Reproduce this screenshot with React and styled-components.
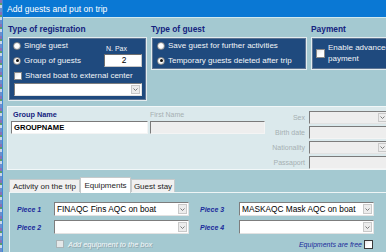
import React from "react";
import styled, { createGlobalStyle } from "styled-components";

const GlobalStyle = createGlobalStyle`
  html, body { margin: 0; padding: 0; background: #a4c9d1; }
  body { font-family: "Liberation Sans", Arial, sans-serif; }
`;

const Screen = styled.div`
  width: 386px;
  height: 252px;
  overflow: hidden;
  display: flex;
`;

const Backdrop = styled.div`
  width: 2px;
  flex: none;
  background: repeating-linear-gradient(180deg, #8a70b4 0 3px, #5c9c6c 3px 5px, #c9d6ea 5px 8px, #6b8ecd 8px 12px);
`;

const Window = styled.div`
  flex: 1;
  min-width: 0;
  display: flex;
  flex-direction: column;
  border-left: 1px solid #3f8ad6;
  background: #a4c9d1;
  overflow: hidden;
`;

const TitleBar = styled.div`
  height: 17px;
  flex: none;
  display: flex;
  align-items: center;
  padding-left: 4px;
  background: #0a78d4;
  color: #ffffff;
  font-size: 8.6px;
  border-bottom: 1px solid #d2e8ee;
`;

const Body = styled.div`
  display: flex;
  flex-direction: column;
  padding: 5px 0 0 4px;
  min-width: 0;
`;

const TopRow = styled.div`
  display: flex;
  gap: 4px;
  align-items: flex-start;
`;

const Group = styled.div`
  flex: none;
  width: ${(p) => p.$w}px;
  margin-left: ${(p) => p.$ml || 0}px;
`;

const GroupTitle = styled.div`
  height: 12px;
  line-height: 12px;
  margin-bottom: 2px;
  font-size: 8.4px;
  font-weight: bold;
  color: #15237f;
  white-space: nowrap;
`;

const BlueBox = styled.div`
  box-sizing: border-box;
  height: ${(p) => p.$h}px;
  background: #1f4a7e;
  border: 1px solid #e4ecef;
  box-shadow: inset 0 0 0 1px #5d7594;
  color: #f2f5f8;
  font-size: 8px;
  padding: ${(p) => p.$pad};
`;

const RegGrid = styled.div`
  display: grid;
  grid-template-columns: 91px 38px;
  grid-template-rows: 15px 15px;
`;

const Row = styled.label`
  display: flex;
  align-items: center;
  gap: 3px;
  height: 15px;
  white-space: nowrap;
`;

const Radio = styled.span`
  width: 8px;
  height: 8px;
  flex: none;
  box-sizing: border-box;
  border-radius: 50%;
  border: 1px solid #8a8a8a;
  background: radial-gradient(circle at 40% 40%, #ffffff 40%, #dcdcdc 100%);
  display: flex;
  align-items: center;
  justify-content: center;
  &::after {
    content: "";
    width: 3px;
    height: 3px;
    border-radius: 50%;
    background: ${(p) => (p.$on ? "#111" : "transparent")};
  }
`;

const Check = styled.span`
  width: ${(p) => p.$s || 8}px;
  height: ${(p) => p.$s || 8}px;
  flex: none;
  box-sizing: border-box;
  margin-left: ${(p) => p.$ml || 0}px;
  border: 1px solid ${(p) => (p.$dis ? "#a9b4b7" : p.$dark ? "#3a3a3a" : "#8a8a8a")};
  background: ${(p) => (p.$dis ? "#e4e8e9" : "linear-gradient(135deg, #e6e6e6, #ffffff 60%)")};
`;

const PaxLabel = styled.div`
  font-size: 7px;
  align-self: end;
  padding: 0 0 1px 2px;
  white-space: nowrap;
`;

const PaxInput = styled.div`
  align-self: center;
  height: 13px;
  box-sizing: border-box;
  background: #fff;
  border: 1px solid #c8c8c8;
  border-top-color: #6f6f6f;
  border-left-color: #6f6f6f;
  color: #000;
  font-size: 8.4px;
  line-height: 11px;
  text-align: center;
  padding-left: 2px;
`;

const SelectBox = styled.div`
  height: ${(p) => p.$h || 14}px;
  width: ${(p) => (p.$w ? `${p.$w}px` : "auto")};
  margin-left: ${(p) => p.$ml || 0}px;
  box-sizing: border-box;
  display: flex;
  align-items: stretch;
  background: ${(p) => (p.$dis ? "#eeeeee" : "#ffffff")};
  border: 1px solid #e2e2e2;
  border-top-color: #7d7d7d;
  border-left-color: #7d7d7d;
  color: #000;
  font-size: 8.3px;
`;

const SelectText = styled.div`
  flex: 1;
  min-width: 0;
  padding-left: 2px;
  display: flex;
  align-items: center;
  white-space: nowrap;
  overflow: hidden;
`;

const ArrowBtn = styled.div`
  width: 9px;
  flex: none;
  margin: 1px;
  box-sizing: border-box;
  background: #ececec;
  border: 1px solid #c9c9c9;
  display: flex;
  align-items: center;
  justify-content: center;
`;

const Chevron = () => (
  <svg width="5" height="3" viewBox="0 0 5 3">
    <polyline points="0.5,0.5 2.5,2.5 4.5,0.5" fill="none" stroke="#7a7a7a" strokeWidth="1" />
  </svg>
);

const Select = ({ text, ...rest }) => (
  <SelectBox {...rest}>
    <SelectText>{text}</SelectText>
    <ArrowBtn>
      <Chevron />
    </ArrowBtn>
  </SelectBox>
);

const PayRow = styled.div`
  display: flex;
  align-items: center;
  gap: 3px;
  height: 100%;
  line-height: 10.5px;
`;

const Panel = styled.div`
  margin-top: 5px;
  height: 64px;
  box-sizing: border-box;
  background: #dbe9ec;
  border: 1px solid #f1f7f8;
  border-right: none;
  padding: 3px 0 0 3px;
  display: flex;
  overflow: hidden;
`;

const FieldCol = styled.div`
  width: ${(p) => p.$w}px;
  flex: none;
  margin-right: ${(p) => p.$mr || 0}px;
`;

const FieldLabel = styled.div`
  height: 10px;
  line-height: 10px;
  margin-bottom: 1px;
  padding-left: ${(p) => p.$pl || 0}px;
  font-size: ${(p) => (p.$bold ? 7.3 : 7)}px;
  font-weight: ${(p) => (p.$bold ? "bold" : "normal")};
  color: ${(p) => (p.$bold ? "#15237f" : "#a6b0b2")};
  white-space: nowrap;
`;

const TextField = styled.div`
  height: 13px;
  box-sizing: border-box;
  background: ${(p) => (p.$dis ? "#eeeeee" : "#ffffff")};
  border: 1px solid #f4f4f4;
  border-top-color: #7a7a7a;
  border-left-color: #7a7a7a;
  padding-left: 2px;
  font-size: 7.6px;
  font-weight: bold;
  line-height: 11px;
  color: #000;
`;

const SideGrid = styled.div`
  flex: none;
  margin-top: 1px;
  display: grid;
  grid-template-columns: 40px 80px;
  grid-auto-rows: 13px;
  column-gap: 4px;
  row-gap: 2px;
`;

const SideLabel = styled.div`
  font-size: 7px;
  color: #a6b0b2;
  text-align: right;
  line-height: 13px;
  white-space: nowrap;
`;

const TabStrip = styled.div`
  display: flex;
  align-items: flex-end;
  height: 15px;
  margin: 7px 0 0 2px;
  position: relative;
  z-index: 1;
`;

const Tab = styled.div`
  width: ${(p) => p.$w}px;
  height: ${(p) => (p.$active ? 16 : 13)}px;
  box-sizing: border-box;
  margin-bottom: ${(p) => (p.$active ? -1 : 0)}px;
  background: ${(p) => (p.$active ? "#ffffff" : "#f0f0f0")};
  border: 1px solid #c6cacb;
  border-bottom: none;
  font-size: 8px;
  color: #1d1d1d;
  display: flex;
  align-items: center;
  justify-content: center;
  white-space: nowrap;
`;

const TabPanel = styled.div`
  margin-left: 2px;
  border-top: 1px solid #eef5f6;
  border-left: 1px solid #eef5f6;
  padding: 9px 0 0 7px;
  height: 60px;
`;

const PieceGrid = styled.div`
  display: grid;
  grid-template-columns: 37px 135px 50px 135px;
  grid-template-rows: 14px 14px 12px;
  row-gap: 4px;
  align-items: center;
`;

const PieceLabel = styled.div`
  font-size: 7px;
  font-weight: bold;
  font-style: italic;
  color: #1b2b9b;
  padding-left: ${(p) => p.$pl || 0}px;
  white-space: nowrap;
`;

const CheckLine = styled.div`
  display: flex;
  align-items: center;
  gap: ${(p) => p.$gap}px;
  justify-content: ${(p) => (p.$end ? "flex-end" : "flex-start")};
  padding-right: ${(p) => (p.$end ? 1 : 0)}px;
  white-space: nowrap;
  font-size: 7px;
  font-style: italic;
`;

const DisabledText = styled.span`
  color: #f4f8f9;
  text-shadow: 1px 1px 0 #8fa4aa;
  font-size: 7.4px;
`;

const FreeText = styled.span`
  color: #1b2b9b;
`;

export default function App() {
  return (
    <>
      <GlobalStyle />
      <Screen>
        <Backdrop />
        <Window>
          <TitleBar>Add guests and put on trip</TitleBar>
          <Body>
            <TopRow>
              <Group $w={139} $ml={1}>
                <GroupTitle>Type of registration</GroupTitle>
                <BlueBox $h={64} $pad="0 4px">
                  <RegGrid>
                    <Row>
                      <Radio />
                      Single guest
                    </Row>
                    <PaxLabel>N. Pax</PaxLabel>
                    <Row>
                      <Radio $on />
                      Group of guests
                    </Row>
                    <PaxInput>2</PaxInput>
                  </RegGrid>
                  <Row>
                    <Check $ml={1} />
                    Shared boat to external center
                  </Row>
                  <Select $h={13} $ml={1} text="" />
                </BlueBox>
              </Group>
              <Group $w={156}>
                <GroupTitle>Type of guest</GroupTitle>
                <BlueBox $h={33} $pad="0 4px 0 5px">
                  <Row>
                    <Radio />
                    Save guest for further activities
                  </Row>
                  <Row>
                    <Radio $on />
                    Temporary guests deleted after trip
                  </Row>
                </BlueBox>
              </Group>
              <Group $w={90}>
                <GroupTitle>Payment</GroupTitle>
                <BlueBox $h={33} $pad="0 0 0 4px">
                  <PayRow>
                    <Check $s={9} />
                    <span>
                      Enable advanced
                      <br />
                      payment
                    </span>
                  </PayRow>
                </BlueBox>
              </Group>
            </TopRow>

            <Panel>
              <FieldCol $w={137} $mr={2}>
                <FieldLabel $bold $pl={2}>Group Name</FieldLabel>
                <TextField>GROUPNAME</TextField>
              </FieldCol>
              <FieldCol $w={115}>
                <FieldLabel>First Name</FieldLabel>
                <TextField $dis />
              </FieldCol>
              <SideGrid>
                <SideLabel>Sex</SideLabel>
                <Select $h={13} $dis text="" />
                <SideLabel>Birth date</SideLabel>
                <TextField $dis />
                <SideLabel>Nationality</SideLabel>
                <Select $h={13} $dis text="" />
                <SideLabel>Passaport</SideLabel>
                <TextField $dis />
              </SideGrid>
            </Panel>

            <TabStrip>
              <Tab $w={71}>Activity on the trip</Tab>
              <Tab $w={51} $active>Equipments</Tab>
              <Tab $w={44}>Guest stay</Tab>
            </TabStrip>
            <TabPanel>
              <PieceGrid>
                <PieceLabel>Piece 1</PieceLabel>
                <Select text="FINAQC Fins AQC on boat" />
                <PieceLabel $pl={11}>Piece 3</PieceLabel>
                <Select text="MASKAQC Mask AQC on boat" />
                <PieceLabel>Piece 2</PieceLabel>
                <Select text="" />
                <PieceLabel $pl={11}>Piece 4</PieceLabel>
                <Select text="" />
                <span />
                <CheckLine $gap={4}>
                  <Check $dis $ml={2} />
                  <DisabledText>Add equipment to the box</DisabledText>
                </CheckLine>
                <span />
                <CheckLine $gap={2} $end>
                  <FreeText>Equipments are free</FreeText>
                  <Check $s={9} $dark />
                </CheckLine>
              </PieceGrid>
            </TabPanel>
          </Body>
        </Window>
      </Screen>
    </>
  );
}
